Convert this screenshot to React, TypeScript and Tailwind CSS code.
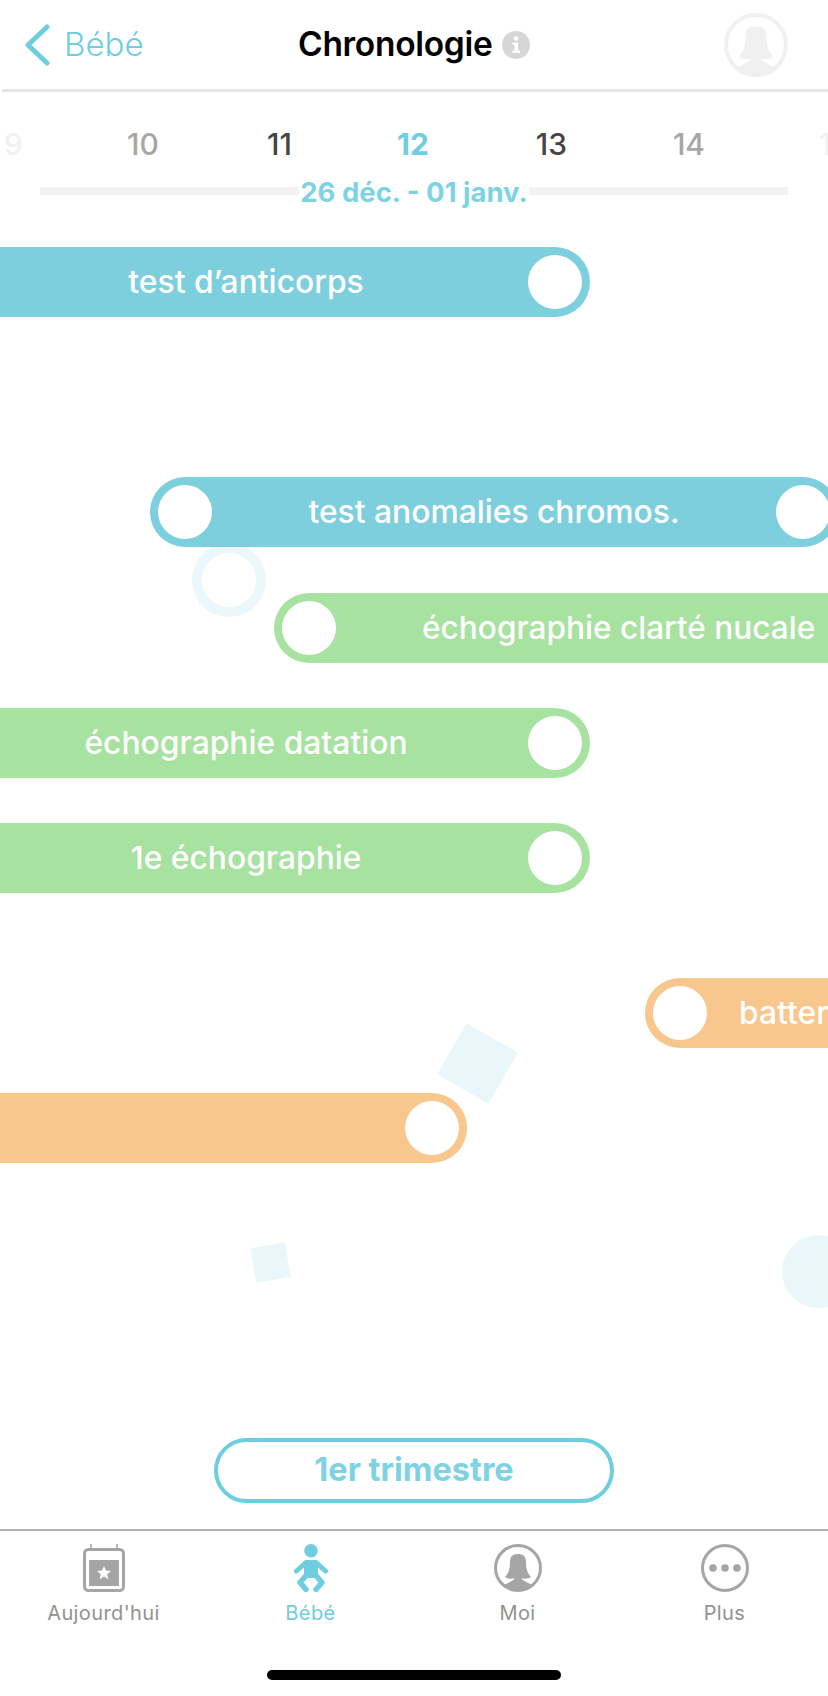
import React from 'react';

function WomanIcon({ color, size }: { color: string; size: number }) {
  return (
    <svg width={size} height={size} viewBox="0 0 48 48" fill="none">
      <circle cx="24" cy="24" r="22.5" stroke={color} strokeWidth="3" />
      <path
        d="M24 10C18 10 16 13 16 18C16 24 15 29 11 33C14 35 18 35 20.500 34C19.500 37 15 38 10 41C14 45 19 47 24 47C29 47 34 45 38 41C33 38 28.500 37 27.500 34C30 35 34 35 37 33C33 29 32 24 32 18C32 13 30 10 24 10Z"
        fill={color}
      />
    </svg>
  );
}

function CalendarIcon() {
  return (
    <svg width="42" height="48" viewBox="0 0 42 48" fill="none">
      <path d="M8 0V5M34 0V5" stroke="#a5a5a5" strokeWidth="1.500" />
      <rect x="1.500" y="5.500" width="39" height="41" rx="4" stroke="#a5a5a5" strokeWidth="3" />
      <rect x="6" y="16" width="30" height="26" fill="#a5a5a5" />
      <path
        d="M21 22L23 26.600L28 27L24.200 30.200L25.400 35.200L21 32.500L16.600 35.200L17.800 30.200L14 27L19 26.600Z"
        fill="#fff"
      />
    </svg>
  );
}

function BabyIcon() {
  return (
    <svg width="34" height="48" viewBox="0 0 34 48" fill="none">
      <circle cx="17" cy="6.800" r="6.800" fill="#6fcde0" />
      <rect x="10" y="16" width="14" height="18" rx="4" fill="#6fcde0" />
      <path d="M12 18.500L2.500 27M22 18.500L31.500 27" stroke="#6fcde0" strokeWidth="5" strokeLinecap="round" />
      <path d="M12.500 31L6 38.500L12 45.500M21.500 31L28 38.500L22 45.500" stroke="#6fcde0" strokeWidth="5.500" strokeLinecap="round" strokeLinejoin="round" />
    </svg>
  );
}

function DotsIcon() {
  return (
    <svg width="48" height="48" viewBox="0 0 48 48" fill="none">
      <circle cx="24" cy="24" r="22.500" stroke="#a5a5a5" strokeWidth="3" />
      <circle cx="12" cy="24" r="3.800" fill="#a5a5a5" />
      <circle cx="24" cy="24" r="3.800" fill="#a5a5a5" />
      <circle cx="36" cy="24" r="3.800" fill="#a5a5a5" />
    </svg>
  );
}

function InfoIcon() {
  return (
    <svg width="28" height="28" viewBox="0 0 28 28">
      <circle cx="14" cy="14" r="14" fill="#d6d6d6" />
      <circle cx="14" cy="7.500" r="2.300" fill="#fff" />
      <path d="M10.500 11.500H16V19.500H18V22H10.500V19.500H12.500V14H10.500Z" fill="#fff" />
    </svg>
  );
}

function BackIcon() {
  return (
    <svg width="26" height="42" viewBox="0 0 26 42" fill="none">
      <path d="M23 3L4 21L23 39" stroke="#6fcde0" strokeWidth="5" strokeLinecap="round" strokeLinejoin="round" />
    </svg>
  );
}

// the week labels don't sit on an even pitch in the scroller, hence the small nudges
const weeks = [
  { n: '9', cls: 'text-[#f1f1f1] font-medium translate-x-[12px]' },
  { n: '10', cls: 'text-[#a6a6a6] font-medium translate-x-[4px]' },
  { n: '11', cls: 'text-[#444444] font-medium translate-x-[3px]' },
  { n: '12', cls: 'text-[#6fcde0] font-bold -translate-x-[1px]' },
  { n: '13', cls: 'text-[#444444] font-medium' },
  { n: '14', cls: 'text-[#a6a6a6] font-medium' },
  { n: '15', cls: 'text-[#f1f1f1] font-medium translate-x-[8px]' },
];

const tabs = [
  { label: "Aujourd'hui", icon: <CalendarIcon />, active: false },
  { label: 'Bébé', icon: <BabyIcon />, active: true },
  { label: 'Moi', icon: <WomanIcon color="#a5a5a5" size={48} />, active: false },
  { label: 'Plus', icon: <DotsIcon />, active: false },
];

function Knob() {
  return <span className="w-[54px] h-[54px] rounded-full bg-white shrink-0" />;
}

export default function App() {
  return (
    <div className="relative w-[828px] h-[1696px] bg-white overflow-hidden font-['Inter',sans-serif]">
      {/* faded shapes behind the bars */}
      <div className="absolute left-[192px] top-[543px] w-[74px] h-[74px] rounded-full border-[10px] border-[#ecf7fb]" />
      <div className="absolute left-[448px] top-[1034px] w-[59px] h-[59px] rotate-30 bg-[#eaf7fa]" />
      <div className="absolute left-[253px] top-[1245px] w-[35px] h-[35px] -rotate-10 bg-[#eaf7fa]" />
      <div className="absolute left-[782px] top-[1235px] w-[73px] h-[73px] rounded-full bg-[#eaf7fa]" />

      <div className="relative flex flex-col h-full">
        <header className="flex items-center h-[89px] shrink-0">
          <span className="ml-[24px] shrink-0"><BackIcon /></span>
          <span className="ml-[14px] w-[234px] text-[33px] font-light text-[#6fcde0]">Bébé</span>
          <span className="text-[33.5px] font-semibold text-black tracking-[-0.3px]">Chronologie</span>
          <span className="ml-[10px]"><InfoIcon /></span>
          <span className="ml-auto mr-[40px]"><WomanIcon color="#f0f0f0" size={64} /></span>
        </header>
        <div className="ml-[2px] h-[3px] bg-[#e5e5e5] shrink-0" />

        <div className="flex justify-center mt-[34px] shrink-0">
          {weeks.map(w => (
            <span key={w.n} className={`w-[137.5px] shrink-0 text-center text-[30px] leading-[36px] ${w.cls}`}>{w.n}</span>
          ))}
        </div>

        <div className="relative mx-[40px] mt-[16px] h-[28px] flex items-center justify-center shrink-0">
          <div className="absolute inset-x-0 top-[9px] h-[8px] bg-[#f2f2f2]" />
          <span className="relative px-[1px] bg-white text-[27.5px] leading-[28px] font-bold text-[#7dd3e4]">26 déc. - 01 janv.</span>
        </div>

        <div className="mt-[41px] w-[590px] h-[70px] pl-2 pr-2 flex items-center rounded-r-full bg-[#7ecfde] shrink-0">
          <span className="flex-1 pr-[44px] text-center text-[31.8px] font-medium text-white">test d’anticorps</span>
          <Knob />
        </div>

        <div className="mt-[160px] ml-[150px] w-[688px] h-[70px] px-2 flex items-center rounded-full bg-[#7ecfde] shrink-0">
          <Knob />
          <span className="flex-1 text-center text-[31.8px] font-medium text-white whitespace-nowrap">test anomalies chromos.</span>
          <Knob />
        </div>

        <div className="mt-[46px] ml-[274px] w-[600px] h-[70px] pl-2 flex items-center rounded-l-full bg-[#a7e2a0] shrink-0">
          <Knob />
          <span className="ml-[86px] text-[31.6px] font-medium text-white whitespace-nowrap">échographie clarté nucale</span>
        </div>

        <div className="mt-[45px] w-[590px] h-[70px] px-2 flex items-center rounded-r-full bg-[#a7e2a0] shrink-0">
          <span className="flex-1 pr-[44px] text-center text-[31.8px] font-medium text-white">échographie datation</span>
          <Knob />
        </div>

        <div className="mt-[45px] w-[590px] h-[70px] px-2 flex items-center rounded-r-full bg-[#a7e2a0] shrink-0">
          <span className="flex-1 pr-[44px] text-center text-[31.8px] font-medium text-white">1e échographie</span>
          <Knob />
        </div>

        <div className="mt-[85px] ml-[645px] w-[300px] h-[70px] pl-2 flex items-center rounded-l-full bg-[#f7c78e] shrink-0">
          <Knob />
          <span className="ml-[32px] text-[31.8px] font-medium text-white whitespace-nowrap">batterie</span>
        </div>

        <div className="mt-[45px] w-[467px] h-[70px] px-2 flex items-center justify-end rounded-r-full bg-[#f7c78e] shrink-0">
          <Knob />
        </div>

        <button className="mt-[275px] mx-auto w-[400px] h-[65px] rounded-full border-4 border-[#6fcde0] text-[32.5px] font-bold text-[#7dd3e4] shrink-0">
          1er trimestre
        </button>

        <div className="mt-[26px] h-[2px] bg-[#b4b4b4] shrink-0" />
        <nav className="grid grid-cols-4 pt-[13px] shrink-0">
          {tabs.map(t => (
            <div key={t.label} className="flex flex-col items-center">
              <div className="h-[48px] flex items-center justify-center">{t.icon}</div>
              <span className={`mt-[8px] text-[20px] leading-[26px] tracking-[0.4px] ${t.active ? 'text-[#6fcde0]' : 'text-[#929292]'}`}>{t.label}</span>
            </div>
          ))}
        </nav>
        <div className="mt-auto mb-[16px] mx-auto w-[294px] h-[10px] rounded-full bg-black shrink-0" />
      </div>
    </div>
  );
}
